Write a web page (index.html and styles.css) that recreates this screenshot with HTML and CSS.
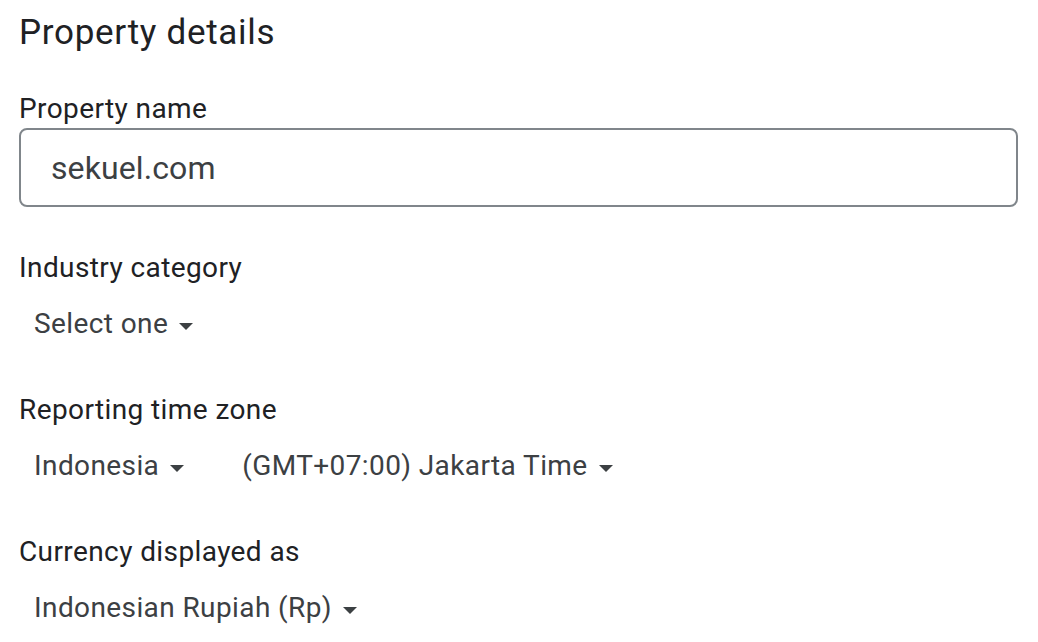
FILE: index.html
```html
<!DOCTYPE html>
<html lang="en">
<head>
<meta charset="utf-8">
<title>Property details</title>
<link rel="stylesheet" href="styles.css">
</head>
<body>
<main class="page">
  <h1 class="title">Property details</h1>

  <section class="field field-name">
    <div class="label">Property name</div>
    <div class="text-input">sekuel.com</div>
  </section>

  <section class="field field-first">
    <div class="label">Industry category</div>
    <div class="selects">
      <span class="select">Select one<svg class="caret" viewBox="0 0 14 7" width="14" height="7"><polygon points="0,0 14,0 7,7"/></svg></span>
    </div>
  </section>

  <section class="field">
    <div class="label">Reporting time zone</div>
    <div class="selects">
      <span class="select">Indonesia<svg class="caret" viewBox="0 0 14 7" width="14" height="7"><polygon points="0,0 14,0 7,7"/></svg></span>
      <span class="select">(GMT+07:00) Jakarta Time<svg class="caret" viewBox="0 0 14 7" width="14" height="7"><polygon points="0,0 14,0 7,7"/></svg></span>
    </div>
  </section>

  <section class="field">
    <div class="label">Currency displayed as</div>
    <div class="selects">
      <span class="select">Indonesian Rupiah (Rp)<svg class="caret" viewBox="0 0 14 7" width="14" height="7"><polygon points="0,0 14,0 7,7"/></svg></span>
    </div>
  </section>
</main>
</body>
</html>
```

FILE: styles.css
```css
html, body {
  margin: 0;
  padding: 0;
  background: #ffffff;
}

body {
  font-family: Roboto, "Liberation Sans", Arial, sans-serif;
  color: #202124;
}

.page {
  padding: 9px 21px 0 19px;
}

.title {
  margin: 0;
  font-size: 35px;
  line-height: 48px;
  font-weight: 400;
  color: #202124;
  letter-spacing: 0.7px;
}

.field {
  margin-top: 50px;
}

.field-name {
  margin-top: 34px;
}

.field-first {
  margin-top: 43px;
}

.label {
  font-size: 28px;
  line-height: 36px;
  color: #202124;
  letter-spacing: 0.4px;
}

.text-input {
  box-sizing: border-box;
  margin-top: 1px;
  height: 79px;
  width: 999px;
  border: 2px solid #80868b;
  border-radius: 8px;
  padding: 2px 30px 0;
  font-size: 32px;
  line-height: 73px;
  color: #3c4043;
  letter-spacing: 0.1px;
}

.selects {
  display: flex;
  margin-top: 20px;
  padding-left: 15px;
  gap: 58px;
}

.select {
  display: inline-flex;
  align-items: center;
  gap: 11px;
  font-size: 28px;
  line-height: 36px;
  color: #3c4043;
  letter-spacing: 0.4px;
}

.caret {
  fill: #3c4043;
  position: relative;
  top: 2px;
}
```
